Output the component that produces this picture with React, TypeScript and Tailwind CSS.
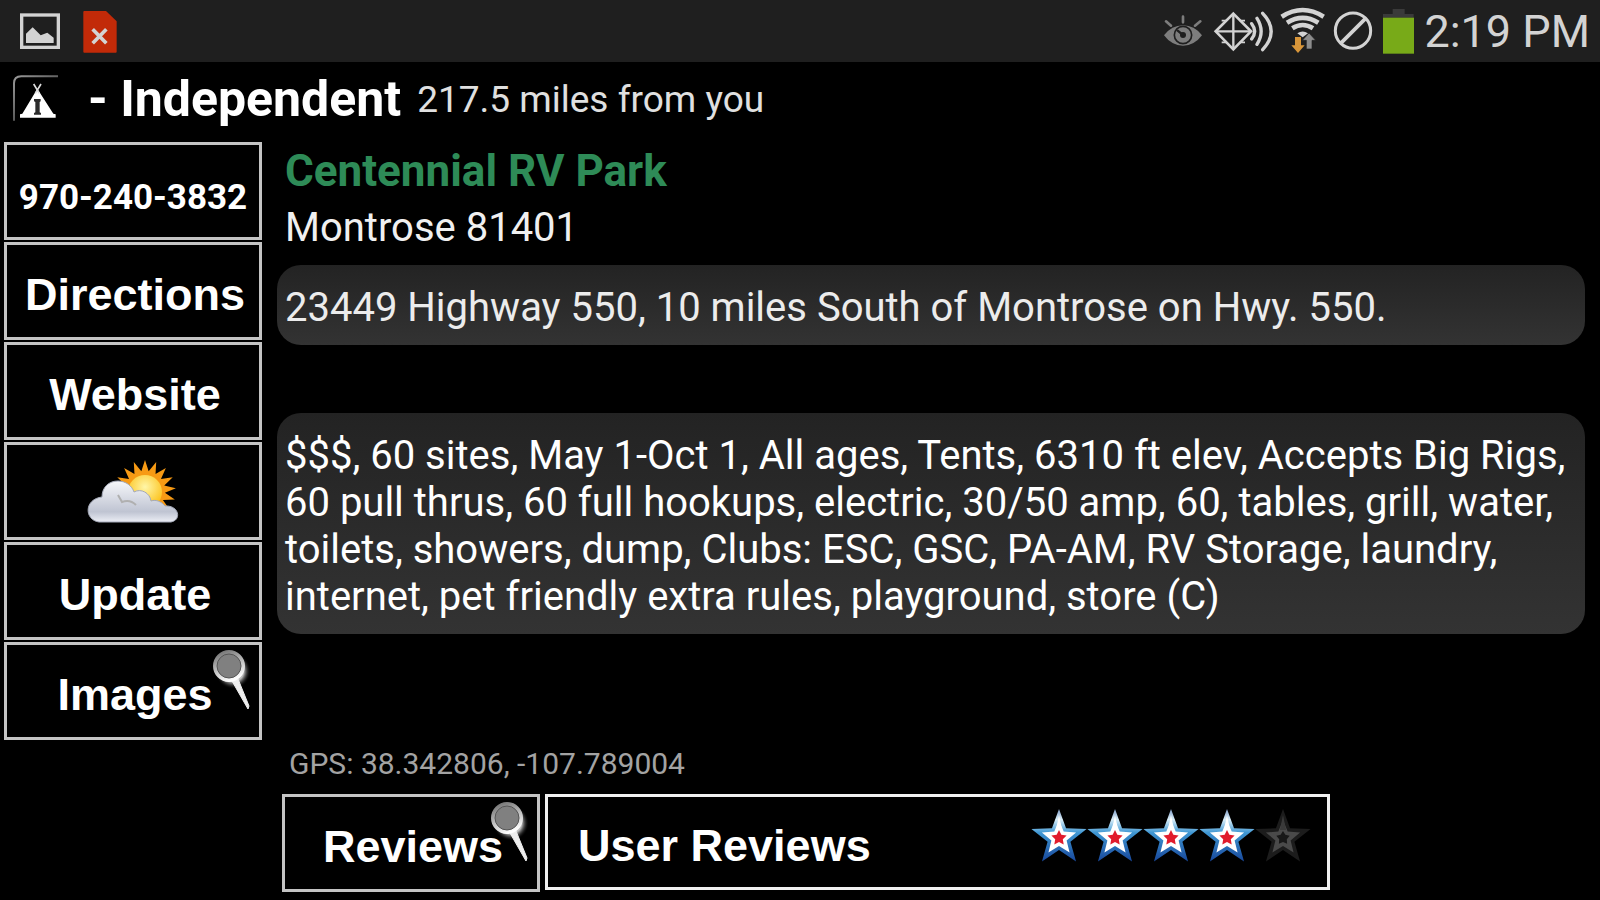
import { ReactNode } from "react";

const actions = ["Directions", "Website"];

const amenities =
  "$$$, 60 sites, May 1-Oct 1, All ages, Tents, 6310 ft elev, Accepts Big Rigs, 60 pull thrus, 60 full hookups, electric, 30/50 amp, 60, tables, grill, water, toilets, showers, dump, Clubs: ESC, GSC, PA-AM, RV Storage, laundry, internet, pet friendly extra rules, playground, store (C)";

// alternating outer / inner points around a center
function burst(cx: number, cy: number, outer: number, inner: number, tips: number) {
  const points: string[] = [];
  for (let i = 0; i < tips * 2; i++) {
    const r = i % 2 === 0 ? outer : inner;
    const a = (Math.PI * i) / tips - Math.PI / 2;
    points.push(`${(cx + r * Math.cos(a)).toFixed(2)},${(cy + r * Math.sin(a)).toFixed(2)}`);
  }
  return points.join(" ");
}

function StatusBar() {
  return (
    <div className="flex h-[62px] items-center justify-between bg-[#1f1f1f] pl-5 pr-2.5 text-[#d3d3d3]">
      <div className="flex items-center gap-[23px]">
        <svg className="h-12 w-10" viewBox="60 21 120 144" fill="none">
          <rect x="65" y="45" width="110" height="97" stroke="#d3d3d3" strokeWidth="10" />
          <path d="M78 129V101L98 82L122 106L142 98L161 113V129Z" fill="#d3d3d3" />
        </svg>
        <svg className="h-12 w-[34px]" viewBox="250 21 102 144" fill="none">
          <path d="M254 33H319L351 64V155Q351 158 348 158H254Q251 158 251 155V36Q251 33 254 33Z" fill="#c22a08" />
          <path d="M279 88L320 130M320 88L279 130" stroke="#d3d3d3" strokeWidth="11" />
        </svg>
      </div>
      <div className="flex items-center gap-1.5">
        <svg className="h-12 w-[42px]" viewBox="36 21 126 144" fill="none" stroke="#7d7d7d">
          <path d="M39 106Q62 76 96 76Q130 76 153 106Q130 137 96 137Q62 137 39 106Z" fill="#7d7d7d" stroke="none" />
          <circle cx="96" cy="105" r="26" stroke="#1f1f1f" strokeWidth="5" />
          <circle cx="96" cy="105" r="9" fill="#1f1f1f" stroke="none" />
          <path d="M96 105L80 92" stroke="#1f1f1f" strokeWidth="7" strokeLinecap="round" />
          <path d="M45 64L60 77M96 50V67M148 64L132 77" strokeWidth="8" strokeLinecap="round" />
        </svg>
        <svg className="h-12 w-[62px]" viewBox="180 21 186 144" fill="none" stroke="#d3d3d3">
          <path d="M247 41L300 94L247 148L194 94Z" strokeWidth="8" />
          <path d="M247 41V148M194 94H300" strokeWidth="7" />
          <path d="M212 62H228M266 62H282M212 127H228M266 127H282" strokeWidth="5" />
          <path d="M302 71Q320 94 302 117M318 55Q343 94 318 133M335 40Q386 94 335 149" strokeWidth="10" strokeLinecap="round" />
        </svg>
        <svg className="h-12 w-12" viewBox="384 21 144 144" fill="none">
          <path d="M392 50Q455 10 518 50M408 68Q455 39 502 68M424 85Q455 65 486 85" stroke="#d3d3d3" strokeWidth="14" />
          <path d="M439 100Q455 89 471 100L455 112Z" fill="#d3d3d3" />
          <path d="M474 99L494 121H483V147H466V121H454Z" fill="#8c8c8c" stroke="#1f1f1f" strokeWidth="2" />
          <path d="M432 111H450V136H461L441 159L421 136H432Z" fill="#d8963a" />
        </svg>
        <svg className="h-12 w-[41px]" viewBox="546 21 123 144" fill="none" stroke="#d3d3d3" strokeWidth="9">
          <circle cx="606" cy="92" r="53" />
          <path d="M569 130L644 55" strokeWidth="11" />
        </svg>
        <svg className="h-12 w-9" viewBox="687 21 108 144">
          <path d="M725 27H761V42H788V53H696V42H725Z" fill="#3a3a3a" />
          <rect x="696" y="53" width="93" height="108" fill="#78aa18" />
        </svg>
        <span className="pl-0.5 text-[45px] leading-none">2:19 PM</span>
      </div>
    </div>
  );
}

function TentIcon() {
  return (
    <svg className="size-12" viewBox="36 222 144 144" fill="none">
      <path d="M42 362V250Q42 229 64 229H174" stroke="url(#edge)" strokeWidth="6" />
      <path d="M112 266L160 341L167 343V353H60V343L67 341Z" fill="#fff" />
      <path d="M101 252L118 280M123 252L106 280" stroke="#ddd" strokeWidth="5" />
      <path d="M102 297H122V304L119 306V337L123 339V344H102V339L106 337V306L102 304Z" fill="#2b2b2b" />
      <defs>
        <linearGradient id="edge" x1="42" y1="229" x2="150" y2="350" gradientUnits="userSpaceOnUse">
          <stop stopColor="#999" />
          <stop offset="1" stopColor="#333" />
        </linearGradient>
      </defs>
    </svg>
  );
}

function WeatherIcon() {
  return (
    <svg className="h-16 w-[92px]" viewBox="0 0 92 64">
      <defs>
        <radialGradient id="sun" cx="0.5" cy="0.35" r="0.6">
          <stop stopColor="#fff6a8" />
          <stop offset="1" stopColor="#fcc21b" />
        </radialGradient>
        <linearGradient id="cloud" x1="0" y1="0" x2="0" y2="1">
          <stop stopColor="#f6f7fa" />
          <stop offset="0.75" stopColor="#bfc4d2" />
          <stop offset="1" stopColor="#eceef5" />
        </linearGradient>
      </defs>
      <polygon points={burst(58, 32, 31, 20, 17)} fill="#f79a14" />
      <circle cx="58" cy="33" r="17" fill="url(#sun)" />
      <path
        d="M12 63C-3 61 -3 40 15 38C15 28 22 22 31 22C39 22 45 27 47 33C54 29 63 34 64 42C69 40 75 43 78 47C92 46 95 61 84 63Z"
        fill="url(#cloud)"
        stroke="#a4a9b8"
      />
      <path d="M31 36L35 43Q43 40 49 46" fill="none" stroke="#b0b0b0" strokeWidth="2" />
    </svg>
  );
}

function Magnifier() {
  return (
    <svg className="absolute right-1 top-1 h-16 w-11" viewBox="0 0 44 64">
      <defs>
        <radialGradient id="glow">
          <stop offset="0.6" stopColor="#bbb" />
          <stop offset="1" stopColor="#000" stopOpacity="0" />
        </radialGradient>
        <linearGradient id="rim" x1="0.2" y1="0" x2="0.6" y2="1">
          <stop stopColor="#777" />
          <stop offset="1" stopColor="#fff" />
        </linearGradient>
      </defs>
      <circle cx="22" cy="22" r="18" fill="url(#glow)" />
      <path d="M21 32L27 30L38 57L37 60Z" fill="#eee" stroke="#eee" strokeLinejoin="round" />
      <circle cx="18" cy="17" r="14" fill="#808080" stroke="url(#rim)" strokeWidth="4" />
      <circle cx="18" cy="17" r="12" fill="none" stroke="#555" />
    </svg>
  );
}

function Star({ on }: { on: boolean }) {
  return (
    <svg className="size-14" viewBox="-28 -28 56 56">
      <defs>
        <linearGradient id="blue" x1="0" y1="0" x2="0" y2="1">
          <stop stopColor="#7f9cc6" />
          <stop offset="0.2" stopColor="#d9eef9" />
          <stop offset="0.45" stopColor="#3f97d3" />
          <stop offset="1" stopColor="#17479b" />
        </linearGradient>
      </defs>
      <polygon points={burst(0, 1, 29, 12, 5)} fill={on ? "url(#blue)" : "#1c1c1c"} />
      <polygon points={burst(0, 1, 18, 8, 5)} fill={on ? "#fff" : "#4a4a4a"} />
      <polygon points="-3,-7 0,-22 3,-7" fill={on ? "#fff" : "#3a3a3a"} />
      <polygon points={burst(0, 1, on ? 8 : 7, 4, 5)} fill={on ? "#e11b2c" : "#181818"} />
    </svg>
  );
}

function SideButton({ children }: { children: ReactNode }) {
  return (
    <button className="relative flex h-[98px] w-[258px] shrink-0 items-center justify-center border-[3px] border-[#c4c4c4] pl-1 pt-1.5 font-['Liberation_Sans'] text-[45px] font-bold leading-none">
      {children}
    </button>
  );
}

function Card({ children }: { children: ReactNode }) {
  return (
    <p className="rounded-3xl bg-linear-to-b from-[#232323] to-[#333] px-2 pb-3.5 pt-[19px] text-[40px] leading-[47px]">
      {children}
    </p>
  );
}

export default function App() {
  return (
    <div className="min-h-screen bg-black font-[Roboto,sans-serif] text-white">
      <StatusBar />

      <header className="flex h-[72px] items-center pl-3">
        <TentIcon />
        <h1 className="ml-7 pt-0.5 text-[50px] font-bold leading-none">- Independent</h1>
        <span className="ml-4 pt-0.5 text-[37px] leading-none text-[#e0e0e0]">217.5 miles from you</span>
      </header>

      <div className="flex pl-1 pt-2">
        <nav className="flex flex-col gap-0.5">
          <button className="h-[98px] w-[258px] border-[3px] border-[#c4c4c4] pt-3 text-[35px] font-bold leading-none">
            970-240-3832
          </button>
          {actions.map((label) => (
            <SideButton key={label}>{label}</SideButton>
          ))}
          <button
            aria-label="Weather"
            className="flex h-[98px] w-[258px] items-center justify-center border-[3px] border-[#c4c4c4]"
          >
            <WeatherIcon />
          </button>
          <SideButton>Update</SideButton>
          <SideButton>
            Images
            <Magnifier />
          </SideButton>
        </nav>

        <main className="min-w-0 flex-1 px-[15px]">
          <h2 className="px-2 text-[44px] font-bold leading-[58px] text-[#2e8b57]">Centennial RV Park</h2>
          <p className="mb-2.5 px-2 text-[40px] leading-[55px] text-[#f0f0f0]">Montrose 81401</p>
          <Card>
            <span className="text-[#ececec]">23449 Highway 550, 10 miles South of Montrose on Hwy. 550.</span>
          </Card>
          <div className="mt-[68px]">
            <Card>{amenities}</Card>
          </div>
          <p className="mt-[110px] pl-3 text-[30px] leading-10 text-[#a3a3a3]">GPS: 38.342806, -107.789004</p>
          <div className="mt-2.5 flex items-start gap-[5px] pl-[5px]">
            <SideButton>
              Reviews
              <Magnifier />
            </SideButton>
            <button className="flex h-24 w-[785px] items-center justify-between border-[3px] border-[#f0f0f0] pl-[30px] pr-4 pt-1.5 font-['Liberation_Sans'] text-[45px] font-bold leading-none">
              User Reviews
              <span className="flex pb-4" role="img" aria-label="4 of 5 stars">
                {[1, 2, 3, 4, 5].map((n) => (
                  <Star key={n} on={n <= 4} />
                ))}
              </span>
            </button>
          </div>
        </main>
      </div>
    </div>
  );
}
